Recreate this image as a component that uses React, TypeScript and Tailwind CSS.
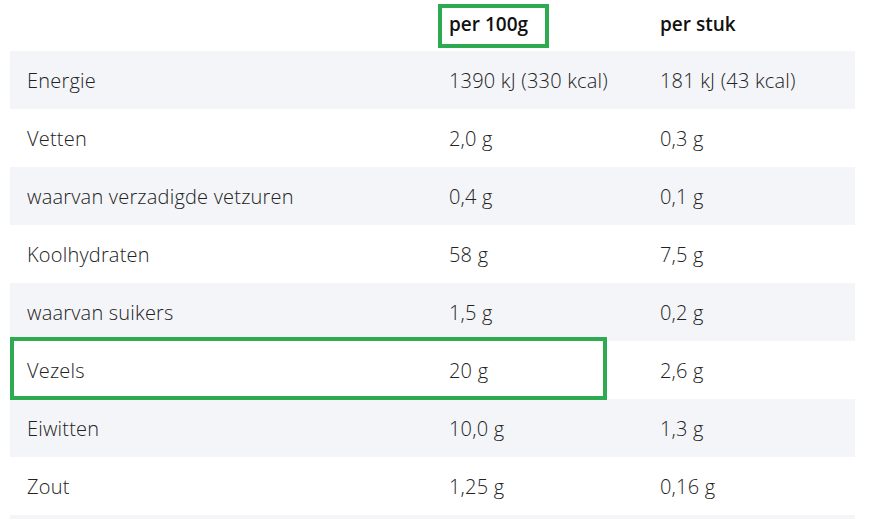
import React from 'react';

interface Row {
  label: string;
  per100: string;
  perPiece: string;
}

const rows: Row[] = [
  { label: 'Energie', per100: '1390 kJ (330 kcal)', perPiece: '181 kJ (43 kcal)' },
  { label: 'Vetten', per100: '2,0 g', perPiece: '0,3 g' },
  { label: 'waarvan verzadigde vetzuren', per100: '0,4 g', perPiece: '0,1 g' },
  { label: 'Koolhydraten', per100: '58 g', perPiece: '7,5 g' },
  { label: 'waarvan suikers', per100: '1,5 g', perPiece: '0,2 g' },
  { label: 'Vezels', per100: '20 g', perPiece: '2,6 g' },
  { label: 'Eiwitten', per100: '10,0 g', perPiece: '1,3 g' },
  { label: 'Zout', per100: '1,25 g', perPiece: '0,16 g' },
  { label: '', per100: '', perPiece: '' },
];

const App: React.FC = () => {
  return (
    <div className="relative w-[871px] h-[519px] overflow-hidden bg-white font-['Open_Sans','Noto_Sans',sans-serif] text-[20px] font-light tracking-[0.2px] text-[#222]">
      <div className="ml-[10px] w-[845px]">
        <div className="grid grid-cols-[422px_211px_212px] h-[51px] items-center pb-[3px]">
          <div />
          <div className="pl-[17px] text-[19px] font-semibold tracking-normal text-[#111]">per 100g</div>
          <div className="pl-[17px] text-[19px] font-semibold tracking-normal text-[#111]">per stuk</div>
        </div>
        {rows.map((row, index) => (
          <div
            key={index}
            className={`grid grid-cols-[422px_211px_212px] h-[58px] items-center pt-[2px] ${index % 2 === 0 ? 'bg-[#f4f5f8]' : 'bg-white'}`}
          >
            <div className="pl-[17px]">{row.label}</div>
            <div className="pl-[17px]">{row.per100}</div>
            <div className="pl-[17px]">{row.perPiece}</div>
          </div>
        ))}
      </div>
      {/* highlight boxes */}
      <div className="absolute left-[438px] top-[4px] w-[111px] h-[44px] border-4 border-[#2eaa50]" />
      <div className="absolute left-[10px] top-[337px] w-[597px] h-[63px] border-4 border-[#2eaa50]" />
    </div>
  );
};

export default App;
